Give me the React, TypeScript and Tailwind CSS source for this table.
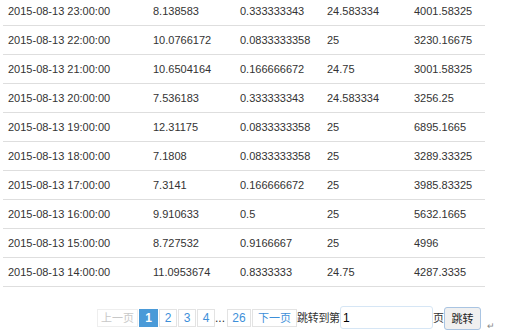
import React from 'react';

const ROWS = [
  ['2015-08-13 23:00:00', '8.138583', '0.333333343', '24.583334', '4001.58325'],
  ['2015-08-13 22:00:00', '10.0766172', '0.0833333358', '25', '3230.16675'],
  ['2015-08-13 21:00:00', '10.6504164', '0.166666672', '24.75', '3001.58325'],
  ['2015-08-13 20:00:00', '7.536183', '0.333333343', '24.583334', '3256.25'],
  ['2015-08-13 19:00:00', '12.31175', '0.0833333358', '25', '6895.1665'],
  ['2015-08-13 18:00:00', '7.1808', '0.0833333358', '25', '3289.33325'],
  ['2015-08-13 17:00:00', '7.3141', '0.166666672', '25', '3985.83325'],
  ['2015-08-13 16:00:00', '9.910633', '0.5', '25', '5632.1665'],
  ['2015-08-13 15:00:00', '8.727532', '0.9166667', '25', '4996'],
  ['2015-08-13 14:00:00', '11.0953674', '0.8333333', '24.75', '4287.3335'],
];

const font = { fontFamily: '"Liberation Sans", "Noto Sans CJK SC", sans-serif' };

export default function App() {
  return (
    <div className="w-[512px] h-[336px] overflow-hidden bg-white text-[#333]" style={font}>
      {/* Data table */}
      <div className="-mt-[3px] ml-[3px] w-[482px] text-[11px]">
        {ROWS.map((r) => (
          <div key={r[0]} className="h-[29px] flex items-center border-b border-[#dedede] pt-[1px]">
            <div className="w-[145px] pl-[5px]">{r[0]}</div>
            <div className="w-[87px] pl-[5px]">{r[1]}</div>
            <div className="w-[87px] pl-[5px]">{r[2]}</div>
            <div className="w-[87px] pl-[5px]">{r[3]}</div>
            <div className="flex-1 pl-[5px]">{r[4]}</div>
          </div>
        ))}
      </div>

      {/* Pagination */}
      <div className="mt-[15px] ml-[97px] flex items-center whitespace-nowrap text-[11px]">
        <span className="shrink-0 h-[18px] w-[41px] flex items-center justify-center border border-[#eee] text-[#c8c8c8]">上一页</span>
        <span className="shrink-0 ml-[1px] h-[18px] w-[19px] flex items-center justify-center bg-[#4a9ad8] border border-[#4a9ad8] text-white font-bold text-[12px]">1</span>
        {['2', '3', '4'].map((p) => (
          <span key={p} className="shrink-0 ml-[1px] h-[18px] w-[18px] flex items-center justify-center border border-[#e3e3e3] text-[#3d8fd9] text-[12px]">{p}</span>
        ))}
        <span className="shrink-0 w-[12px] text-[#333] text-[12px] leading-none">...</span>
        <span className="shrink-0 h-[18px] w-[24px] flex items-center justify-center border border-[#e3e3e3] text-[#3d8fd9] text-[12px]">26</span>
        <span className="shrink-0 ml-[1px] h-[18px] w-[45px] flex items-center justify-center border border-[#e3e3e3] text-[#3d8fd9]">下一页</span>
        <span className="shrink-0 w-[43px] tracking-[-0.3px] text-[#333]">跳转到第</span>
        <input
          readOnly
          value="1"
          className="shrink-0 h-[23px] w-[93px] px-[2px] border border-[#d6e6f5] rounded-[3px] text-[12px] text-black outline-none"
          style={font}
        />
        <span className="shrink-0 w-[11px] text-[#333]">页</span>
        <button className="shrink-0 relative top-[1px] h-[23px] w-[37px] border border-[#a9c4e2] rounded-[3px] bg-[#f0f0f0] text-[11px] text-[#222]" style={font}>
          跳转
        </button>
        <span className="shrink-0 ml-[6px] mt-[18px] text-[9px] text-[#888]">↵</span>
      </div>
    </div>
  );
}
